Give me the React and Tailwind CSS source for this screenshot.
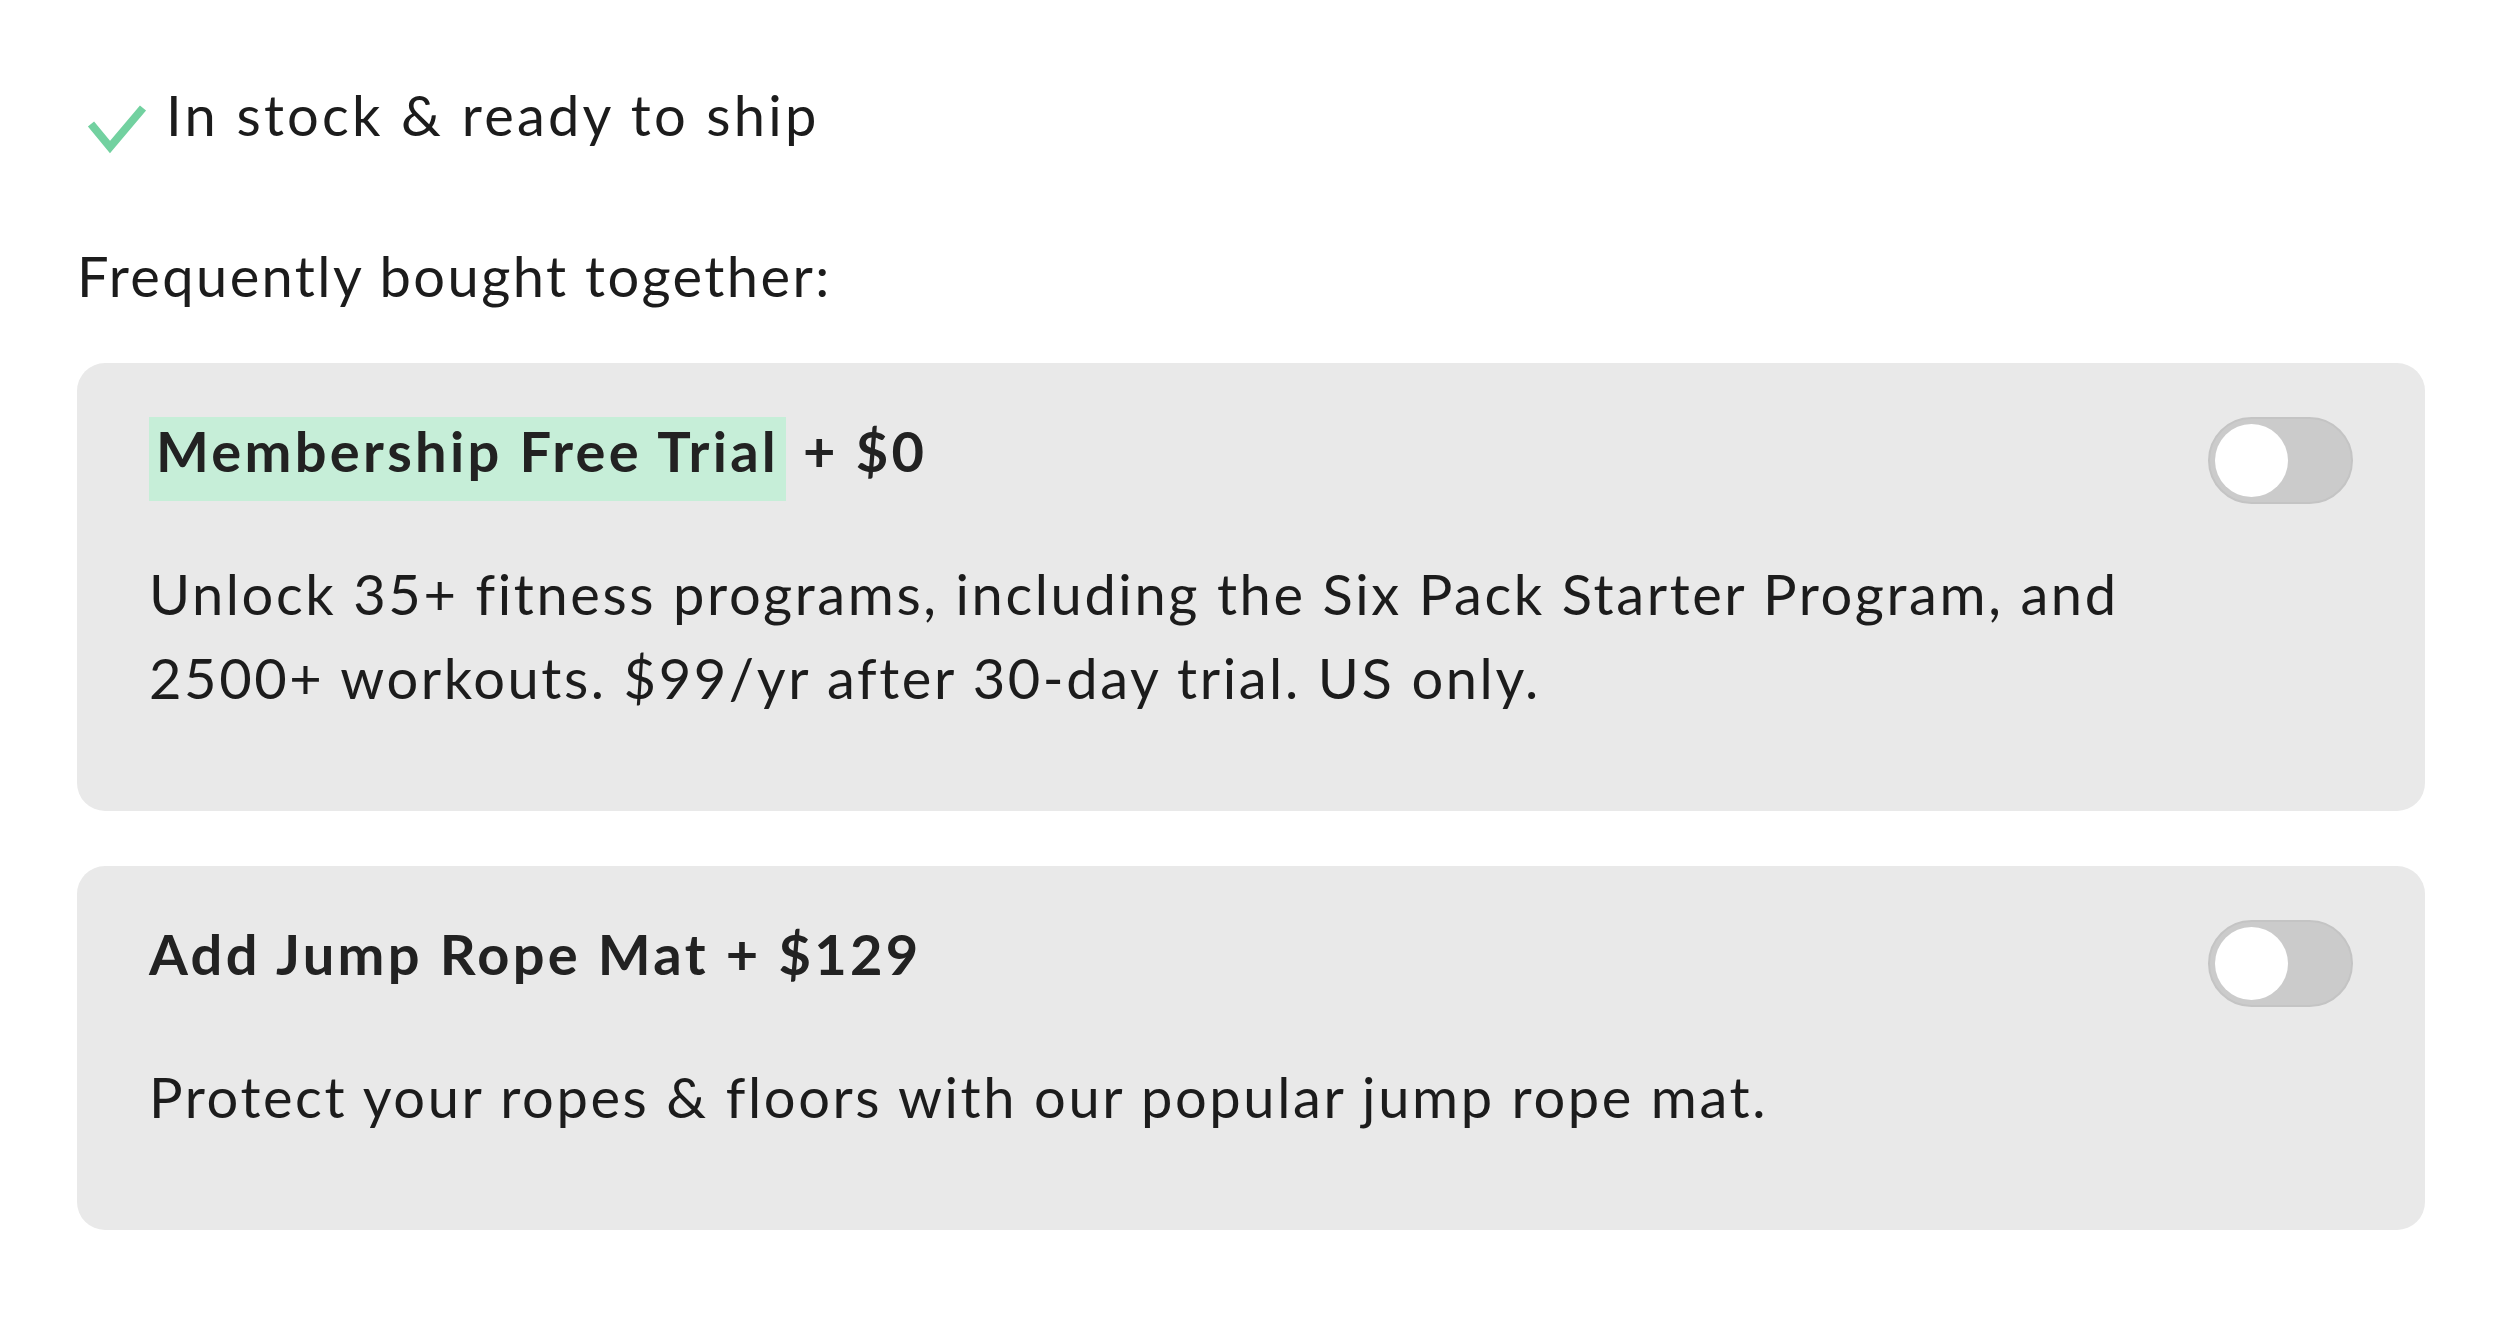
import React from "react";

function Toggle() {
  return (
    <div className="w-[145px] h-[87px] rounded-full bg-[#cbcbcb] border-2 border-[#c4c4c4] flex items-center pl-[5px] shrink-0">
      <div className="w-[73px] h-[73px] rounded-full bg-white" />
    </div>
  );
}

function Card({ highlight, name, price, children }) {
  return (
    <div className="bg-[#e9e9e9] rounded-[28px] pt-[54px] pb-[91px] px-[72px]">
      <div className="flex items-start justify-between">
        <div className="font-bold text-[#222222] text-[56px] leading-[67px] tracking-[3.3px]">
          <span
            className={
              "inline-block leading-[67px] pb-[17px] " +
              (highlight ? "bg-[#c6eed8] px-[7px]" : "")
            }
          >
            {name}
          </span>
          <span>{" + " + price}</span>
        </div>
        <Toggle />
      </div>
      <p className="mt-[48px] text-[56px] leading-[84px] tracking-[2.6px] text-[#1c1c1c] max-w-[2080px]">
        {children}
      </p>
    </div>
  );
}

export default function App() {
  return (
    <div
      className="min-h-[1321px] bg-white pl-[77px] pr-[75px] pt-[73px] text-[#1c1c1c]"
      style={{ fontFamily: "Lato, 'Noto Sans', sans-serif" }}
    >
      <div className="flex items-start">
        <svg
          width="62"
          height="52"
          viewBox="0 0 62 52"
          className="ml-[9px] mt-[30px] shrink-0"
        >
          <path
            d="M5 21 L24 44 L57 5"
            fill="none"
            stroke="#72d1a0"
            strokeWidth="8"
            strokeLinejoin="miter"
          />
        </svg>
        <div className="ml-[18px] text-[56px] leading-[84px] tracking-[3.2px]">
          In stock &amp; ready to ship
        </div>
      </div>
      <div className="mt-[77px] text-[56px] leading-[84px] tracking-[2.4px]">
        Frequently bought together:
      </div>
      <div className="mt-[45px] flex flex-col gap-[55px]">
        <Card highlight name="Membership Free Trial" price="$0">
          Unlock 35+ fitness programs, including the Six Pack Starter Program, and 2500+
          workouts. $99/yr after 30-day trial. US only.
        </Card>
        <Card name="Add Jump Rope Mat" price="$129">
          Protect your ropes &amp; floors with our popular jump rope mat.
        </Card>
      </div>
    </div>
  );
}
